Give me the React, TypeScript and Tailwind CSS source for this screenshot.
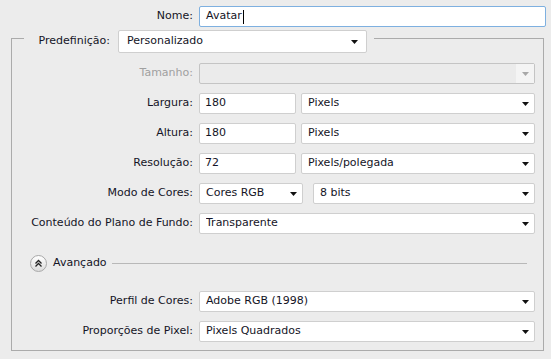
import React from "react"

const font = { fontFamily: '"DejaVu Sans", Tahoma, sans-serif' }

function Arrow({ disabled = false }: { disabled?: boolean }) {
  return (
    <svg width="7" height="4" viewBox="0 0 7 4" className="shrink-0">
      <path d="M0 0H7L3.5 4Z" fill={disabled ? "#a8a8a8" : "#111"} />
    </svg>
  )
}

function Select({ value, className = "" }: { value: string; className?: string }) {
  return (
    <div
      className={`flex h-[21px] items-center justify-between rounded-[2px] border border-[#cfcfcf] bg-white pl-[6px] pr-[5px] ${className}`}
    >
      <span className="truncate">{value}</span>
      <Arrow />
    </div>
  )
}

function TextBox({ value, className = "" }: { value: string; className?: string }) {
  return (
    <div className={`flex h-[21px] items-center rounded-[2px] border border-[#cfcfcf] bg-white pl-[5px] ${className}`}>
      {value}
    </div>
  )
}

function Row({ label, children }: { label: string; children: React.ReactNode }) {
  return (
    <div className="flex items-center">
      <div className="w-[187px] shrink-0 pr-[6px] text-right whitespace-nowrap">{label}</div>
      <div className="flex w-[336px] gap-[5px]">{children}</div>
    </div>
  )
}

export default function App() {
  return (
    <div className="h-[359px] w-[551px] overflow-hidden bg-[#ececec] text-[11px] text-[#141426]" style={font}>
      <div className="flex items-center pt-[6px]">
        <div className="w-[199px] pr-[6px] text-right">Nome:</div>
        <div className="flex h-[21px] w-[347px] items-center rounded-[2px] border border-[#7eb0e0] bg-white pl-[6px]">
          Avatar<span className="ml-px h-[14px] w-px bg-black" />
        </div>
      </div>

      <fieldset className="ml-[11px] mt-[3px] h-[321px] w-[533px] border border-[#ababab] p-0">
        <legend className="ml-[12px] h-[16px] px-[7px]">
          <div className="flex items-center">
            <span className="w-[87px] pr-[8px] text-right">Predefinição:</span>
            <Select value="Personalizado" className="h-[23px] w-[249px] pl-[8px] pr-[8px]" />
          </div>
        </legend>

        <div className="flex flex-col gap-[9px] pt-[17px]">
          <div className="flex items-center">
            <div className="w-[187px] shrink-0 pr-[6px] text-right text-[#a0a0a0]">Tamanho:</div>
            <div className="flex h-[21px] w-[336px] items-center justify-end rounded-[2px] border border-[#c4c4c4] bg-[#ebebeb]">
              <div className="flex h-full w-[18px] items-center justify-center bg-[#f4f4f4]">
                <Arrow disabled />
              </div>
            </div>
          </div>
          <Row label="Largura:">
            <TextBox value="180" className="w-[97px]" />
            <Select value="Pixels" className="flex-1" />
          </Row>
          <Row label="Altura:">
            <TextBox value="180" className="w-[97px]" />
            <Select value="Pixels" className="flex-1" />
          </Row>
          <Row label="Resolução:">
            <TextBox value="72" className="w-[97px]" />
            <Select value="Pixels/polegada" className="flex-1" />
          </Row>
          <Row label="Modo de Cores:">
            <Select value="Cores RGB" className="w-[104px]" />
            <Select value="8 bits" className="ml-[5px] flex-1" />
          </Row>
          <Row label="Conteúdo do Plano de Fundo:">
            <Select value="Transparente" className="flex-1" />
          </Row>
        </div>

        <div className="mt-[21px] flex h-[17px] items-center pl-[18px] pr-[16px]">
          <div className="flex h-[17px] w-[17px] items-center justify-center rounded-full border border-[#a8a8a8] bg-gradient-to-b from-white to-[#dcdcdc]">
            <svg width="9" height="9" viewBox="0 0 9 9">
              <path d="M1.5 4.5L4.5 1.5L7.5 4.5M1.5 7.5L4.5 4.5L7.5 7.5" fill="none" stroke="#222" strokeWidth="1.3" />
            </svg>
          </div>
          <span className="ml-[6px]">Avançado</span>
          <div className="ml-[5px] h-px flex-1 bg-[#b8b8b8]" />
        </div>

        <div className="mt-[19px] flex flex-col gap-[9px]">
          <Row label="Perfil de Cores:">
            <Select value="Adobe RGB (1998)" className="flex-1" />
          </Row>
          <Row label="Proporções de Pixel:">
            <Select value="Pixels Quadrados" className="flex-1" />
          </Row>
        </div>
      </fieldset>
    </div>
  )
}
